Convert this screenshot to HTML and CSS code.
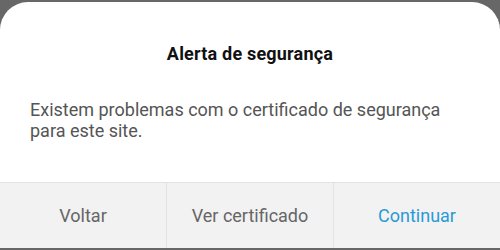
FILE: index.html
```html
<!DOCTYPE html>
<html lang="pt">
<head>
    <meta charset="UTF-8">
    <title>Alerta de segurança</title>
    <link rel="stylesheet" href="styles.css">
</head>
<body>
    <!-- Security dialog -->
    <div class="dialog">
        <h2 class="dialog-title">Alerta de segurança</h2>
        <p class="dialog-text">Existem problemas com o certificado de segurança para este site.</p>
        <div class="dialog-buttons">
            <button class="btn">Voltar</button>
            <button class="btn">Ver certificado</button>
            <button class="btn btn-primary">Continuar</button>
        </div>
    </div>
</body>
</html>
```

FILE: styles.css
```css
* {
    margin: 0;
    padding: 0;
    box-sizing: border-box;
    font-family: 'Roboto', 'Liberation Sans', sans-serif;
}

body {
    width: 500px;
    height: 250px;
    background: #676767;
    overflow: hidden;
    padding-top: 2px;
}

/* Dialog card */
.dialog {
    background: #ffffff;
    border-radius: 28px 28px 0 0;
    height: 246px;
    display: flex;
    flex-direction: column;
    overflow: hidden;
}

.dialog-title {
    font-size: 18px;
    font-weight: 700;
    letter-spacing: 0.2px;
    color: #111;
    text-align: center;
    margin-top: 41px;
    line-height: 22px;
}

.dialog-text {
    font-size: 18px;
    color: #555;
    line-height: 21px;
    padding: 0 20px 0 30px;
    margin-top: 34px;
}

/* Button row */
.dialog-buttons {
    margin-top: auto;
    display: flex;
    height: 66px;
    background: #f2f2f2;
    border-top: 1px solid #e2e2e2;
}

.btn {
    flex: 1;
    border: none;
    background: none;
    font-size: 18px;
    color: #666;
    cursor: pointer;
}

.btn + .btn {
    border-left: 1px solid #e2e2e2;
}

.btn-primary {
    color: #2a9ad6;
}
```
